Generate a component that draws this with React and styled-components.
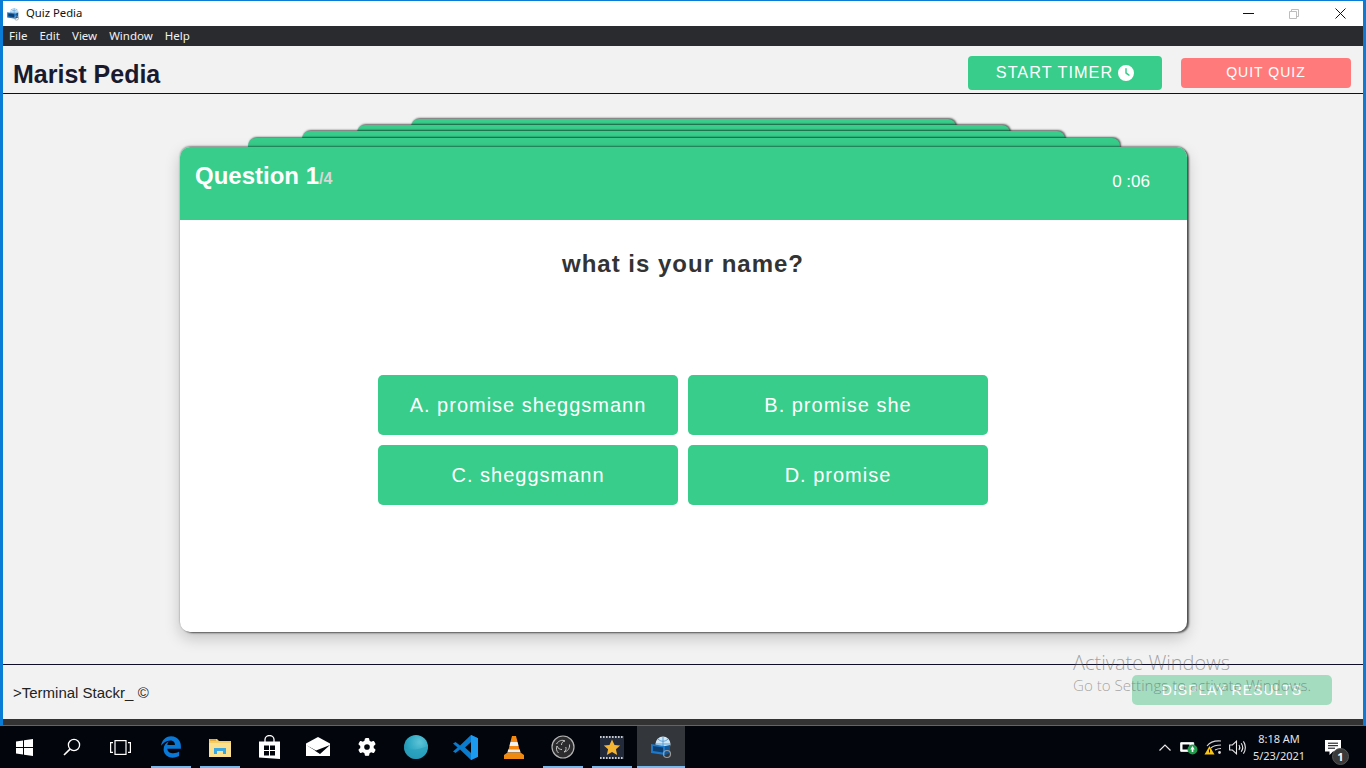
import styled, { createGlobalStyle } from "styled-components"
import { FaClock, FaEdgeLegacy, FaGear } from "react-icons/fa6"

const GlobalStyle = createGlobalStyle`
    html, body {
        margin: 0;
        padding: 0;
        overflow: hidden;
        background: #02050c;
    }
    * {
        box-sizing: border-box;
    }
`
const Screen = styled.div`
    width: 1366px;
    height: 768px;
    display: flex;
    flex-direction: column;
    font-family: "Liberation Sans", Arial, sans-serif;
`
const AppWindow = styled.div`
    position: relative;
    height: 726px;
    display: flex;
    flex-direction: column;
    border: solid #0a7cd6;
    border-width: 1px 3px 1px 3px;
    background: #f2f2f2;
`
const TitleBar = styled.div`
    height: 25px;
    flex: none;
    display: flex;
    align-items: center;
    background: #fff;
    padding-left: 3px;
    color: #111;
    font: 11.3px "Noto Sans", "Open Sans", sans-serif;
`
const TitleText = styled.span`
    margin: 0 0 2px 6px;
`
const WindowControls = styled.div`
    margin-left: auto;
    display: flex;
`
const WindowControl = styled.div`
    width: 46px;
    height: 25px;
    display: flex;
    align-items: center;
    justify-content: center;
`
const MenuBar = styled.div`
    height: 20px;
    flex: none;
    display: flex;
    align-items: center;
    gap: 12px;
    padding: 0 0 1px 6px;
    background: #2a2b2f;
    color: #f1f1f1;
    font: 11.5px "Noto Sans", "Open Sans", sans-serif;
`
const Header = styled.header`
    height: 48px;
    flex: none;
    display: flex;
    align-items: center;
    padding: 6px 12px 0 10px;
    border-bottom: 1px solid #0f0f2a;
`
const Brand = styled.h1`
    margin: 2px auto 0 0;
    font-size: 25px;
    font-weight: 700;
    line-height: 30px;
    color: #1a1a2e;
`
const ActionButton = styled.button`
    display: flex;
    align-items: center;
    justify-content: center;
    gap: 5px;
    padding: 0 0 ${(props) => props.$lift || 0}px;
    border: none;
    border-radius: 4px;
    color: #fff;
    font-family: inherit;
    letter-spacing: 1px;
    width: ${(props) => props.$width}px;
    height: ${(props) => props.$height}px;
    font-size: ${(props) => props.$size}px;
    margin-left: ${(props) => props.$left || 0}px;
    background: ${(props) => props.$bg};
`
const Main = styled.main`
    flex: 1;
    display: flex;
    flex-direction: column;
    align-items: center;
    padding-top: 25px;
`
const Stack = styled.div`
    width: 1007px;
    margin-left: 1px;
    display: flex;
    flex-direction: column;
    align-items: center;
`
const BackCard = styled.div`
    position: relative;
    height: 30px;
    margin-bottom: ${(props) => props.$step - 30}px;
    width: ${(props) => props.$width}px;
    background: #38cd8b;
    border-radius: 8px 8px 0 0;
    box-shadow: 1px -1px 2px rgba(0, 0, 0, 0.6);
`
const QuizCard = styled.section`
    position: relative;
    width: 100%;
    height: 485px;
    padding-right: 1px;
    display: flex;
    flex-direction: column;
    align-items: center;
    background: #fff;
    border-radius: 10px;
    box-shadow: 2px 1px 2px rgba(0, 0, 0, 0.6), 0 -1px 2px rgba(0, 0, 0, 0.4), 0 6px 16px rgba(0, 0, 0, 0.2);
`
const CardHead = styled.div`
    width: 1007px;
    height: 73px;
    flex: none;
    align-self: flex-start;
    display: flex;
    justify-content: space-between;
    padding: 14px 37px 0 15px;
    background: #38cd8b;
    border-radius: 10px 10px 0 0;
    color: #fff;
`
const QuestionCount = styled.div`
    font-size: 24px;
    font-weight: 700;
    line-height: 30px;
`
const CountTotal = styled.span`
    font-size: 16px;
    color: #d7d7d7;
`
const Timer = styled.div`
    margin-top: 10px;
    font-size: 17px;
    line-height: 22px;
`
const Prompt = styled.h2`
    margin: 30px 0 0;
    font-size: 24px;
    font-weight: 700;
    line-height: 28px;
    letter-spacing: 1px;
    color: #333;
`
const Answers = styled.div`
    margin-top: 97px;
    display: grid;
    grid-template-columns: 300px 300px;
    grid-auto-rows: 60px;
    gap: 10px;
`
const Answer = styled.button`
    border: none;
    border-radius: 5px;
    background: #38cd8b;
    color: #fff;
    font-family: inherit;
    font-size: 20px;
    letter-spacing: 1px;
`
const Footer = styled.footer`
    height: 55px;
    flex: none;
    display: flex;
    align-items: center;
    justify-content: space-between;
    padding: 1px 31px 0 10px;
    border-top: 1px solid #0f0f2a;
    color: #222;
    font-size: 15px;
`
const ResultsButton = styled.button`
    width: 200px;
    height: 30px;
    align-self: flex-start;
    margin-top: 9px;
    border: none;
    border-radius: 5px;
    background: #a4dcc0;
    color: #fff;
    font-family: inherit;
    font-size: 14px;
    letter-spacing: 1px;
`
const Watermark = styled.div`
    position: absolute;
    left: 1070px;
    top: 649px;
    color: rgba(80, 80, 80, 0.5);
    font-family: "Open Sans", sans-serif;
    font-weight: 300;
    pointer-events: none;
`
const WatermarkTitle = styled.div`
    font-size: 20px;
    line-height: 25px;
`
const WatermarkText = styled.div`
    font-size: 15.1px;
    line-height: 20px;
`
const BottomStrip = styled.div`
    height: 6px;
    flex: none;
    background: #333;
`
const Taskbar = styled.div`
    height: 42px;
    flex: none;
    display: flex;
    background: #02050c;
    color: #e4e4e4;
`
const ShellButton = styled.div`
    width: 48px;
    height: 42px;
    display: flex;
    align-items: center;
    justify-content: center;
`
const PinnedApps = styled.div`
    display: flex;
    gap: 1px;
    margin-left: 3px;
`
const Pinned = styled.div`
    position: relative;
    width: 48px;
    height: 42px;
    display: flex;
    align-items: center;
    justify-content: center;
    color: ${(props) => props.$color || "#fff"};
    background: ${(props) => (props.$active ? "#33363b" : "transparent")};
    &::after {
        content: "";
        display: ${(props) => (props.$open ? "block" : "none")};
        position: absolute;
        bottom: 0;
        height: 2px;
        left: ${(props) => (props.$active ? 0 : 4)}px;
        right: ${(props) => (props.$active ? 0 : 4)}px;
        background: #76b9ed;
    }
`
const Tray = styled.div`
    margin-left: auto;
    display: flex;
    align-items: center;
`
const TrayIcon = styled.div`
    width: 24px;
    display: flex;
    justify-content: center;
`
const Clock = styled.div`
    width: 62px;
    margin-left: -1px;
    text-align: center;
    font: 11px/17px "Noto Sans", "Open Sans", sans-serif;
`
const NoticeBox = styled.div`
    position: relative;
    width: 40px;
    margin-left: 3px;
    margin-right: 13px;
    display: flex;
    justify-content: center;
`
const NoticeBadge = styled.span`
    position: absolute;
    left: 19px;
    top: 8px;
    width: 17px;
    height: 17px;
    border-radius: 50%;
    background: #3a3a3a;
    border: 1px solid #555;
    color: #fff;
    font: 700 11px/15px "Noto Sans", sans-serif;
    text-align: center;
`

function BoxGlobe({ size }) {
    return (
        <svg width={size} height={size} viewBox="0 0 24 24">
            <circle cx="14" cy="9" r="7.5" fill="#cfe6f7" />
            <path d="M7 9h14M14 2v14M9 4c3 3 7 3 10 0M9 14c3-3 7-3 10 0" stroke="#5a9fd6" strokeWidth="1" fill="none" />
            <path d="M2 9l14 2v9L2 18z" fill="#1d78c8" />
            <path d="M4 11l10 1.5v5L4 16z" fill="#0d3f72" />
            <path d="M16 11l5-1v8l-5 2z" fill="#125a9c" />
            <circle cx="18" cy="19" r="3.5" fill="none" stroke="#9a9a9a" strokeWidth="1.2" />
        </svg>
    )
}

function StartGlyph() {
    return (
        <svg width="17" height="17" viewBox="0 0 17 17" fill="#fff">
            <path d="M0 2.4l7-1v6.6H0zM8 1.2L17 0v8H8zM0 9h7v6.6l-7-1zM8 9h9v8l-9-1.2z" />
        </svg>
    )
}

function SearchGlyph() {
    return (
        <svg width="18" height="18" viewBox="0 0 18 18" fill="none" stroke="#fff" strokeWidth="1.3">
            <circle cx="11" cy="7" r="5.6" />
            <path d="M7 11.2L1 17" strokeWidth="1.6" />
        </svg>
    )
}

function TaskViewGlyph() {
    return (
        <svg width="21" height="15" viewBox="0 0 21 15" fill="none" stroke="#fff" strokeWidth="1.2">
            <rect x="5" y="0.6" width="11" height="13.8" />
            <path d="M3 2.6H0.6v9.8H3M18 2.6h2.4v9.8H18" />
        </svg>
    )
}

function FolderGlyph() {
    return (
        <svg width="22" height="19" viewBox="0 0 22 19">
            <path d="M0 1h8l2 2h12v16H0z" fill="#f3cd67" />
            <path d="M0 5h22v14H0z" fill="#fbe08f" />
            <path d="M1 1h6v2H1z" fill="#e2a93b" />
            <path d="M5 10h12v6h-3v-3H8v3H5z" fill="#3aa6e2" />
            <path d="M8 13h6v6H8z" fill="#fbe08f" />
        </svg>
    )
}

function StoreGlyph() {
    return (
        <svg width="21" height="24" viewBox="0 0 21 24">
            <path d="M6 7V4.5a4.5 4 0 0 1 9 0V7" fill="none" stroke="#fff" strokeWidth="1.3" />
            <path d="M0 6.5h21V24L0 22.5z" fill="#fff" />
            <path d="M5 10.5h5v4.5H5zM11 10.5h5v4.5h-5zM5 16h5v4.5H5zM11 16h5v4.5h-5z" fill="#02050c" />
        </svg>
    )
}

function MailGlyph() {
    return (
        <svg width="24" height="20" viewBox="0 0 24 20">
            <path d="M12 0l12 6.5V19H0V6.5z" fill="#fff" />
            <path d="M0 8l10 5.5L24 8l-10 9z" fill="#02050c" />
            <path d="M0 8.5l9 5-9 5z" fill="#fff" />
        </svg>
    )
}

function SphereGlyph() {
    return (
        <svg width="24" height="24" viewBox="0 0 24 24">
            <defs>
                <radialGradient id="sphere" cx="0.65" cy="0.3" r="0.8">
                    <stop offset="0" stopColor="#5ec4d6" />
                    <stop offset="0.6" stopColor="#2ba6c2" />
                    <stop offset="1" stopColor="#1d89a6" />
                </radialGradient>
            </defs>
            <circle cx="12" cy="12" r="12" fill="url(#sphere)" />
            <path d="M0 13c6 3 14 2 24-2-1 7-6 13-12 13S1 19 0 13z" fill="#2a9fbd" opacity="0.7" />
        </svg>
    )
}

function CodeGlyph() {
    return (
        <svg width="25" height="25" viewBox="0 0 25 25">
            <path d="M18 0l7 3.2v18.6L18 25 7 14.6 2.6 18 0 16.6 4.6 12.5 0 8.4 2.6 7 7 10.4z" fill="#0a7ccf" />
            <path d="M18 0l7 3.2v18.6L18 25V18l-5.6-5.5L18 7z" fill="#1b9af0" />
            <path d="M18 7l-6 5.5 6 5.5z" fill="#02050c" />
        </svg>
    )
}

function ConeGlyph() {
    return (
        <svg width="20" height="23" viewBox="0 0 20 23">
            <path d="M8 0h4l1.6 6H6.4z" fill="#f7880f" />
            <path d="M6.4 6h7.2l1 4H5.4z" fill="#f2f2f2" />
            <path d="M5.4 10h9.2l1.2 5H4.2z" fill="#f7880f" />
            <path d="M4.2 13.5h11.6l.8 3H3.4z" fill="#eee" />
            <path d="M3.5 16.5h13L20 19v4H0v-4z" fill="#f08a10" />
        </svg>
    )
}

function ObsGlyph() {
    return (
        <svg width="24" height="24" viewBox="0 0 24 24">
            <circle cx="12" cy="12" r="11" fill="#2c2c2e" stroke="#b5b5b5" strokeWidth="1.2" />
            <path d="M5.500 9c2-3.500 6-4.500 8.500-3-2.500.5-3.500 2-3.500 4M18.500 9.500c.5 4-2 7-5.500 7.500 1.800-1.200 2.500-3 1.800-5M7.500 18c-2.200-2-2.500-4.500-1.500-7 1 2.500 2.800 3.500 5 3.500" fill="none" stroke="#c8c8c8" strokeWidth="1" />
        </svg>
    )
}

function StarFilmGlyph() {
    return (
        <svg width="24" height="23" viewBox="0 0 24 23">
            <rect width="24" height="23" fill="#232a3a" />
            <path d="M0 1h24M0 22h24" stroke="#fff" strokeWidth="1.4" strokeDasharray="1.6 1.4" />
            <path d="M12 3.5l2.5 5.4 5.7.6-4.3 3.8 1.3 5.7-5.2-3-5.2 3 1.3-5.7-4.3-3.8 5.7-.6z" fill="#f6b531" />
        </svg>
    )
}

function BatteryGlyph() {
    return (
        <svg width="18" height="15" viewBox="0 0 18 15">
            <path d="M0.7 2.7h13v8.6H0.7z" fill="#fff" stroke="#fff" />
            <path d="M2.5 4.5h7v5h-7z" fill="#02050c" />
            <circle cx="12.5" cy="9.5" r="5" fill="#1f9a4a" />
            <path d="M12.5 6l2.2 3.5h-1.400v2.500h-1.600V9.500h-1.400z" fill="#fff" />
        </svg>
    )
}

function WifiGlyph() {
    return (
        <svg width="18" height="16" viewBox="0 0 18 16" fill="none" stroke="#d8d8d8" strokeWidth="1.1">
            <path d="M3 7C6 3 11 1.500 17 2M7 9c2-2 5-3 10-3M11 11c2-1 4-1.500 6-1.500" />
            <circle cx="15.500" cy="13.500" r="1.400" fill="#d8d8d8" stroke="none" />
            <path d="M5.500 7L10.500 15.500H0.500z" fill="#f6c319" stroke="none" />
            <path d="M5 10.500h1v3H5z" fill="#02050c" stroke="none" />
        </svg>
    )
}

function SpeakerGlyph() {
    return (
        <svg width="17" height="15" viewBox="0 0 17 15" fill="none" stroke="#e8e8e8" strokeWidth="1.100">
            <path d="M0.600 5h2.800L7.500 1.200v12.600L3.400 10H0.600z" />
            <path d="M10 5c1 1.500 1 3.500 0 5M12.200 3.200c1.800 2.500 1.800 6 0 8.600M14.400 1.400c2.600 3.500 2.600 8.700 0 12.200" />
        </svg>
    )
}

function NoticeGlyph() {
    return (
        <svg width="16" height="15" viewBox="0 0 16 15">
            <path d="M0 0h16v11.500h-8l-3.500 3.500v-3.500H0z" fill="#fff" />
            <path d="M3 3.200h10M3 5.700h10M3 8.200h7" stroke="#02050c" strokeWidth="1" />
        </svg>
    )
}

const menus = ["File", "Edit", "View", "Window", "Help"]
const backCards = [
    { width: 545, step: 6 },
    { width: 653, step: 6 },
    { width: 763, step: 7 },
    { width: 872, step: 9 },
]
const answers = ["A. promise sheggsmann", "B. promise she", "C. sheggsmann", "D. promise"]

export default function App() {
    return (
        <Screen>
            <GlobalStyle />
            <AppWindow>
                <TitleBar>
                    <BoxGlobe size={14} />
                    <TitleText>Quiz Pedia</TitleText>
                    <WindowControls>
                        <WindowControl>
                            <svg width="11" height="1"><path d="M0 .5h11" stroke="#111" /></svg>
                        </WindowControl>
                        <WindowControl>
                            <svg width="10" height="10" fill="none" stroke="#bdbdbd">
                                <path d="M.5 2.500h7v7h-7zM2.500 2.500v-2h7v7h-2" />
                            </svg>
                        </WindowControl>
                        <WindowControl>
                            <svg width="11" height="11" stroke="#111"><path d="M.5.500l10 10M10.500.500l-10 10" /></svg>
                        </WindowControl>
                    </WindowControls>
                </TitleBar>
                <MenuBar>
                    {menus.map((menu) => (
                        <span key={menu}>{menu}</span>
                    ))}
                </MenuBar>
                <Header>
                    <Brand>Marist Pedia</Brand>
                    <ActionButton $width={194} $height={34} $size={16.3} $bg="#38cd8b">
                        START TIMER <FaClock size={16} />
                    </ActionButton>
                    <ActionButton $width={170} $height={30} $size={14} $left={19} $lift={2} $bg="#ff7b7b">
                        QUIT QUIZ
                    </ActionButton>
                </Header>
                <Main>
                    <Stack>
                        {backCards.map((card) => (
                            <BackCard key={card.width} $width={card.width} $step={card.step} />
                        ))}
                        <QuizCard>
                            <CardHead>
                                <QuestionCount>
                                    Question 1<CountTotal>/4</CountTotal>
                                </QuestionCount>
                                <Timer>0 :06</Timer>
                            </CardHead>
                            <Prompt>what is your name?</Prompt>
                            <Answers>
                                {answers.map((answer) => (
                                    <Answer key={answer}>{answer}</Answer>
                                ))}
                            </Answers>
                        </QuizCard>
                    </Stack>
                </Main>
                <Footer>
                    <span>&gt;Terminal Stackr_ ©</span>
                    <ResultsButton>DISPLAY RESULTS</ResultsButton>
                </Footer>
                <BottomStrip />
                <Watermark>
                    <WatermarkTitle>Activate Windows</WatermarkTitle>
                    <WatermarkText>Go to Settings to activate Windows.</WatermarkText>
                </Watermark>
            </AppWindow>
            <Taskbar>
                <ShellButton><StartGlyph /></ShellButton>
                <ShellButton><SearchGlyph /></ShellButton>
                <ShellButton><TaskViewGlyph /></ShellButton>
                <PinnedApps>
                    <Pinned $open $color="#0a78d7"><FaEdgeLegacy size={22} /></Pinned>
                    <Pinned $open><FolderGlyph /></Pinned>
                    <Pinned><StoreGlyph /></Pinned>
                    <Pinned><MailGlyph /></Pinned>
                    <Pinned><FaGear size={18} /></Pinned>
                    <Pinned><SphereGlyph /></Pinned>
                    <Pinned><CodeGlyph /></Pinned>
                    <Pinned><ConeGlyph /></Pinned>
                    <Pinned $open><ObsGlyph /></Pinned>
                    <Pinned $open><StarFilmGlyph /></Pinned>
                    <Pinned $open $active><BoxGlobe size={24} /></Pinned>
                </PinnedApps>
                <Tray>
                    <TrayIcon>
                        <svg width="12" height="7" fill="none" stroke="#e8e8e8" strokeWidth="1.200"><path d="M.5 6.500L6 1l5.500 5.500" /></svg>
                    </TrayIcon>
                    <TrayIcon><BatteryGlyph /></TrayIcon>
                    <TrayIcon><WifiGlyph /></TrayIcon>
                    <TrayIcon><SpeakerGlyph /></TrayIcon>
                    <Clock>
                        <div>8:18 AM</div>
                        <div>5/23/2021</div>
                    </Clock>
                    <NoticeBox>
                        <NoticeGlyph />
                        <NoticeBadge>1</NoticeBadge>
                    </NoticeBox>
                </Tray>
            </Taskbar>
        </Screen>
    )
}
